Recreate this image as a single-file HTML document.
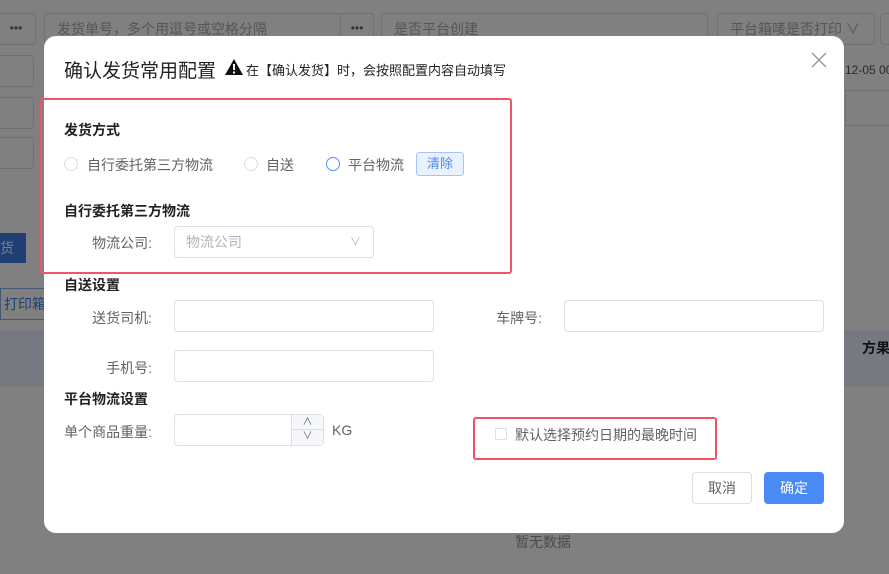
<!DOCTYPE html>
<html><head><meta charset="utf-8"><style>
*{box-sizing:border-box;margin:0;padding:0}
body{width:889px;height:574px;overflow:hidden;background:#808080;font-family:"Liberation Sans","Noto Sans CJK SC",sans-serif;font-size:14px;color:#606266;position:relative;white-space:nowrap}
.a{position:absolute}
.bg{border:1px solid #6e7073;border-radius:4px;background:#808080;color:#555}
.dlg{position:absolute;left:44px;top:36px;width:800px;height:497px;background:#fff;border-radius:12px;z-index:10}
.inp{position:absolute;border:1px solid #dcdfe6;border-radius:4px;background:#fff;height:32px}
.lbl{position:absolute;font-size:14px;color:#606266;text-align:right}
.h{position:absolute;font-size:14px;font-weight:bold;color:#222}
.radio{position:absolute;width:14px;height:14px;border:1px solid #dcdfe6;border-radius:50%}
.red{position:absolute;border:2px solid #f25366;border-radius:3px}
</style></head><body>
<div class="a bg" style="left:-4px;top:13px;width:40px;height:32px;text-align:center;line-height:28px;font-size:12px;color:#333">•••</div>
<div class="a bg" style="left:44px;top:13px;width:330px;height:32px;padding-left:12px;line-height:30px">发货单号，多个用逗号或空格分隔</div>
<div class="a bg" style="left:340px;top:13px;width:34px;height:32px;text-align:center;line-height:28px;font-size:12px;color:#333">•••</div>
<div class="a bg" style="left:381px;top:13px;width:327px;height:32px;padding-left:12px;line-height:30px">是否平台创建</div>
<div class="a bg" style="left:717px;top:13px;width:158px;height:32px;padding-left:12px;line-height:30px">平台箱唛是否打印 ∨</div>
<div class="a bg" style="left:880px;top:13px;width:20px;height:32px"></div>
<div class="a bg" style="left:-4px;top:55px;width:38px;height:32px"></div>
<div class="a bg" style="left:-4px;top:97px;width:38px;height:32px"></div>
<div class="a bg" style="left:-4px;top:137px;width:38px;height:32px"></div>
<div class="a" style="left:845px;top:63px;font-size:12px;color:#2a2a2a">12-05 00</div>
<div class="a" style="left:845px;top:90px;width:50px;height:36px;border:1px solid #6e7073"></div>
<div class="a" style="left:0;top:233px;width:26px;height:30px;background:#1f3f74;color:#808080;line-height:30px">货</div>
<div class="a" style="left:0;top:288px;width:46px;height:32px;border:1px solid #455877;color:#1f3f74;line-height:30px;padding-left:3px;overflow:hidden">打印箱</div>
<div class="a" style="left:0;top:330px;width:889px;height:56px;background:#777980"></div>
<div class="a" style="left:862px;top:338px;font-weight:bold;color:#111">方果</div>
<div class="a" style="left:515px;top:532px;color:#4c4c4c">暂无数据</div>
<div class="dlg">
  <div class="a" style="left:20px;top:20px;font-size:19px;color:#222">确认发货常用配置</div>
  <svg class="a" style="left:180px;top:22px" width="20" height="18" viewBox="0 0 20 18"><path d="M10 1L19 17H1Z" fill="#111"/><rect x="9" y="6" width="2" height="6" fill="#fff"/><rect x="9" y="13.5" width="2" height="2" fill="#fff"/></svg>
  <div class="a" style="left:202px;top:24px;font-size:13px;color:#222">在【确认发货】时，会按照配置内容自动填写</div>
  <svg class="a" style="left:766px;top:15px" width="18" height="18"><path d="M2 2L16 16M16 2L2 16" stroke="#999" stroke-width="1.5"/></svg>

  <div class="h" style="left:20px;top:84px">发货方式</div>
  <div class="radio" style="left:20px;top:121px"></div>
  <div class="a" style="left:43px;top:119px">自行委托第三方物流</div>
  <div class="radio" style="left:200px;top:121px"></div>
  <div class="a" style="left:222px;top:119px">自送</div>
  <div class="radio" style="left:282px;top:121px;border-color:#5b8ff9;border-width:1.5px"></div>
  <div class="a" style="left:304px;top:119px">平台物流</div>
  <div class="a" style="left:372px;top:116px;width:48px;height:24px;border:1px solid #a6c4fa;background:#eaf1fe;border-radius:3px;color:#4b87f5;font-size:13px;text-align:center;line-height:22px">清除</div>

  <div class="h" style="left:20px;top:165px">自行委托第三方物流</div>
  <div class="lbl" style="left:26px;top:197px;width:82px">物流公司:</div>
  <div class="inp" style="left:130px;top:190px;width:200px;padding-left:11px;line-height:30px;color:#b0b3b9">物流公司<span style="position:absolute;right:12px;top:0;font-size:11px">∨</span></div>

  <div class="red" style="left:-4px;top:62px;width:472px;height:176px"></div>

  <div class="h" style="left:20px;top:239px">自送设置</div>
  <div class="lbl" style="left:16px;top:272px;width:92px">送货司机:</div>
  <div class="inp" style="left:130px;top:264px;width:260px"></div>
  <div class="lbl" style="left:416px;top:272px;width:82px">车牌号:</div>
  <div class="inp" style="left:520px;top:264px;width:260px"></div>
  <div class="lbl" style="left:16px;top:322px;width:92px">手机号:</div>
  <div class="inp" style="left:130px;top:314px;width:260px"></div>

  <div class="h" style="left:20px;top:353px">平台物流设置</div>
  <div class="lbl" style="left:6px;top:386px;width:102px">单个商品重量:</div>
  <div class="inp" style="left:130px;top:378px;width:150px">
    <div class="a" style="right:0;top:0;width:32px;height:30px;border-left:1px solid #dcdfe6;background:#f5f7fa">
      <div style="height:15px;border-bottom:1px solid #dcdfe6;text-align:center;font-size:10px;line-height:15px">∧</div>
      <div style="height:15px;text-align:center;font-size:10px;line-height:14px">∨</div>
    </div>
  </div>
  <div class="a" style="left:288px;top:386px">KG</div>
  <div class="red" style="left:429px;top:381px;width:244px;height:43px"></div>
  <div class="a" style="left:451px;top:392px;width:12px;height:12px;border:1px solid #dcdfe6;border-radius:2px"></div>
  <div class="a" style="left:471px;top:389px">默认选择预约日期的最晚时间</div>

  <div class="a" style="left:648px;top:436px;width:60px;height:32px;border:1px solid #dcdfe6;border-radius:4px;text-align:center;line-height:30px">取消</div>
  <div class="a" style="left:720px;top:436px;width:60px;height:32px;background:#4a8af4;border-radius:4px;color:#fff;text-align:center;line-height:32px">确定</div>
</div>
</body></html>
